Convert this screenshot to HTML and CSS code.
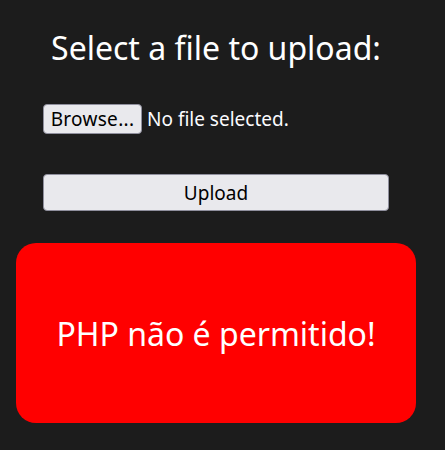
FILE: index.html
```html
<!DOCTYPE html>
<html>
<head>
<meta charset="utf-8">
<link rel="stylesheet" href="styles.css">
</head>
<body>
<div class="page">
  <form class="upload-form">
    <h1 class="title">Select a file to upload:</h1>
    <div class="file-row">
      <span class="browse">Browse...</span>
      <span class="file-status">No file selected.</span>
    </div>
    <button type="button" class="upload-btn">Upload</button>
  </form>
  <div class="alert">PHP não é permitido!</div>
</div>
</body>
</html>
```
FILE: styles.css
```css
html, body {
  margin: 0;
  padding: 0;
  background: #1c1c1c;
}
body {
  font-family: "Noto Sans", "Open Sans", sans-serif;
  color: #fbfbfe;
}
.page {
  width: 400px;
  margin-left: 16px;
  padding-top: 26px;
}
.upload-form {
  display: flex;
  flex-direction: column;
  padding: 0 27px;
}
.title {
  margin: 0;
  font-size: 32px;
  font-weight: 400;
  line-height: 44px;
  text-align: center;
  color: #ffffff;
}
.file-row {
  display: flex;
  align-items: center;
  gap: 5px;
  margin-top: 34px;
  font-size: 19px;
}
.browse {
  box-sizing: border-box;
  height: 30px;
  width: 99px;
  display: flex;
  align-items: center;
  justify-content: center;
  background: #e9e9ed;
  color: #000;
  border: 1px solid #8f8f9d;
  border-radius: 4px;
  font-size: 19px;
  letter-spacing: 0.3px;
}
.file-status {
  color: #fbfbfe;
}
.upload-btn {
  box-sizing: border-box;
  margin-top: 40px;
  height: 37px;
  width: 346px;
  background: #e9e9ed;
  color: #000;
  border: 1px solid #8f8f9d;
  border-radius: 4px;
  font-family: inherit;
  font-size: 19px;
  padding: 0;
}
.alert {
  margin-top: 32px;
  height: 180px;
  background: #ff0000;
  border-radius: 20px;
  display: flex;
  align-items: center;
  justify-content: center;
  font-size: 32px;
  color: #ffffff;
}
```
